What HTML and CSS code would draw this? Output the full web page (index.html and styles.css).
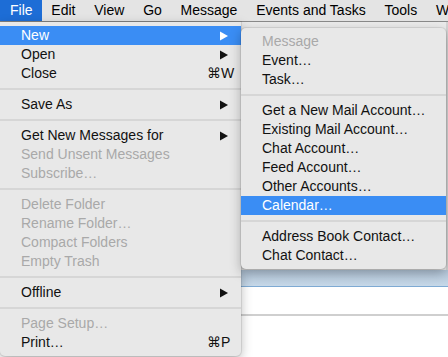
FILE: index.html
```html
<!DOCTYPE html>
<html lang="en">
<head>
    <meta charset="UTF-8">
    <meta name="viewport" content="width=device-width, initial-scale=1.0">
    <title>File menu</title>
    <link rel="stylesheet" href="styles.css">
</head>
<body>
    <div class="screen">
        <div class="menubar">
            <span class="mb-item active">File</span>
            <span class="mb-item">Edit</span>
            <span class="mb-item">View</span>
            <span class="mb-item">Go</span>
            <span class="mb-item">Message</span>
            <span class="mb-item">Events and Tasks</span>
            <span class="mb-item">Tools</span>
            <span class="mb-item">Window</span>
        </div>

        <!-- window behind the menus -->
        <div class="window">
            <div class="win-top"></div>
            <div class="win-band"></div>
            <div class="win-row"></div>
            <div class="win-rest"></div>
        </div>

        <div class="menu file-menu">
            <div class="item selected"><span class="label">New</span><svg class="arrow" width="8" height="10" viewBox="0 0 8 10"><path d="M0 0.5 L8 5 L0 9.5 Z"/></svg></div>
            <div class="item"><span class="label">Open</span><svg class="arrow" width="8" height="10" viewBox="0 0 8 10"><path d="M0 0.5 L8 5 L0 9.5 Z"/></svg></div>
            <div class="item"><span class="label">Close</span><span class="key">⌘W</span></div>
            <div class="sep"></div>
            <div class="item"><span class="label">Save As</span><svg class="arrow" width="8" height="10" viewBox="0 0 8 10"><path d="M0 0.5 L8 5 L0 9.5 Z"/></svg></div>
            <div class="sep"></div>
            <div class="item"><span class="label">Get New Messages for</span><svg class="arrow" width="8" height="10" viewBox="0 0 8 10"><path d="M0 0.5 L8 5 L0 9.5 Z"/></svg></div>
            <div class="item disabled"><span class="label">Send Unsent Messages</span></div>
            <div class="item disabled"><span class="label">Subscribe…</span></div>
            <div class="sep"></div>
            <div class="item disabled"><span class="label">Delete Folder</span></div>
            <div class="item disabled"><span class="label">Rename Folder…</span></div>
            <div class="item disabled"><span class="label">Compact Folders</span></div>
            <div class="item disabled"><span class="label">Empty Trash</span></div>
            <div class="sep"></div>
            <div class="item"><span class="label">Offline</span><svg class="arrow" width="8" height="10" viewBox="0 0 8 10"><path d="M0 0.5 L8 5 L0 9.5 Z"/></svg></div>
            <div class="sep"></div>
            <div class="item disabled"><span class="label">Page Setup…</span></div>
            <div class="item"><span class="label">Print…</span><span class="key">⌘P</span></div>
        </div>

        <div class="menu sub-menu">
            <div class="item disabled"><span class="label">Message</span></div>
            <div class="item"><span class="label">Event…</span></div>
            <div class="item"><span class="label">Task…</span></div>
            <div class="sep"></div>
            <div class="item"><span class="label">Get a New Mail Account…</span></div>
            <div class="item"><span class="label">Existing Mail Account…</span></div>
            <div class="item"><span class="label">Chat Account…</span></div>
            <div class="item"><span class="label">Feed Account…</span></div>
            <div class="item"><span class="label">Other Accounts…</span></div>
            <div class="item selected"><span class="label">Calendar…</span></div>
            <div class="sep"></div>
            <div class="item"><span class="label">Address Book Contact…</span></div>
            <div class="item"><span class="label">Chat Contact…</span></div>
        </div>
    </div>
</body>
</html>
```

FILE: styles.css
```css
/* page */
* {
    box-sizing: border-box;
}
body {
    margin: 0;
    background-color: #ffffff;
    font-family: 'Liberation Sans', 'DejaVu Sans', sans-serif;
    font-size: 14px;
    color: #111111;
}
.screen {
    position: relative;
    width: 448px;
    height: 357px;
    overflow: hidden;
}

/* top menu bar */
.menubar {
    display: flex;
    height: 22px;
    padding-left: 1px;
    background-color: #e4e4e4;
    border-bottom: 1px solid #8a8a8a;
    white-space: nowrap;
    overflow: hidden;
}
.mb-item {
    padding: 0 9.4px;
    line-height: 21px;
    color: #000000;
}
.mb-item.active {
    margin-left: -1px;
    padding-left: 10px;
    background-color: #1d6dd6;
    color: #ffffff;
}

/* app window behind */
.window {
    display: flex;
    flex-direction: column;
}
.win-top {
    height: 248px;
    background-color: #ebebeb;
    border-right: 2px solid #d4d4d4;
}
.win-band {
    height: 17px;
    background: linear-gradient(#b4c7da, #c6d8e8);
    border-bottom: 1px solid #7eaad3;
}
.win-row {
    height: 29px;
    background-color: #ffffff;
    border-bottom: 2px solid #cfcfcf;
}
.win-rest {
    height: 60px;
    background-color: #ffffff;
}

/* dropdown menus */
.menu {
    position: absolute;
    padding: 4px 0;
    background-color: #e8e8e8;
    box-shadow: 0 4px 12px rgba(0, 0, 0, 0.28), 0 0 0 1px rgba(0, 0, 0, 0.08);
}
.file-menu {
    left: 0;
    top: 22px;
    width: 241px;
    border-radius: 0 0 5px 5px;
}
.sub-menu {
    left: 241px;
    top: 28px;
    width: 205px;
    border-radius: 5px;
}

.item {
    display: flex;
    align-items: center;
    height: 19px;
    padding-left: 21px;
    line-height: 19px;
    color: #111111;
}
.item .label {
    flex: 1;
}
.item.disabled {
    color: #a9a9a9;
}
.item.selected {
    background-color: #3a8df4;
    color: #ffffff;
}
.key {
    width: 34px;
}
.arrow {
    margin-right: 13px;
    fill: currentColor;
}
.sep {
    height: 2px;
    margin: 5px 0;
    background-color: #d6d6d6;
}
```
